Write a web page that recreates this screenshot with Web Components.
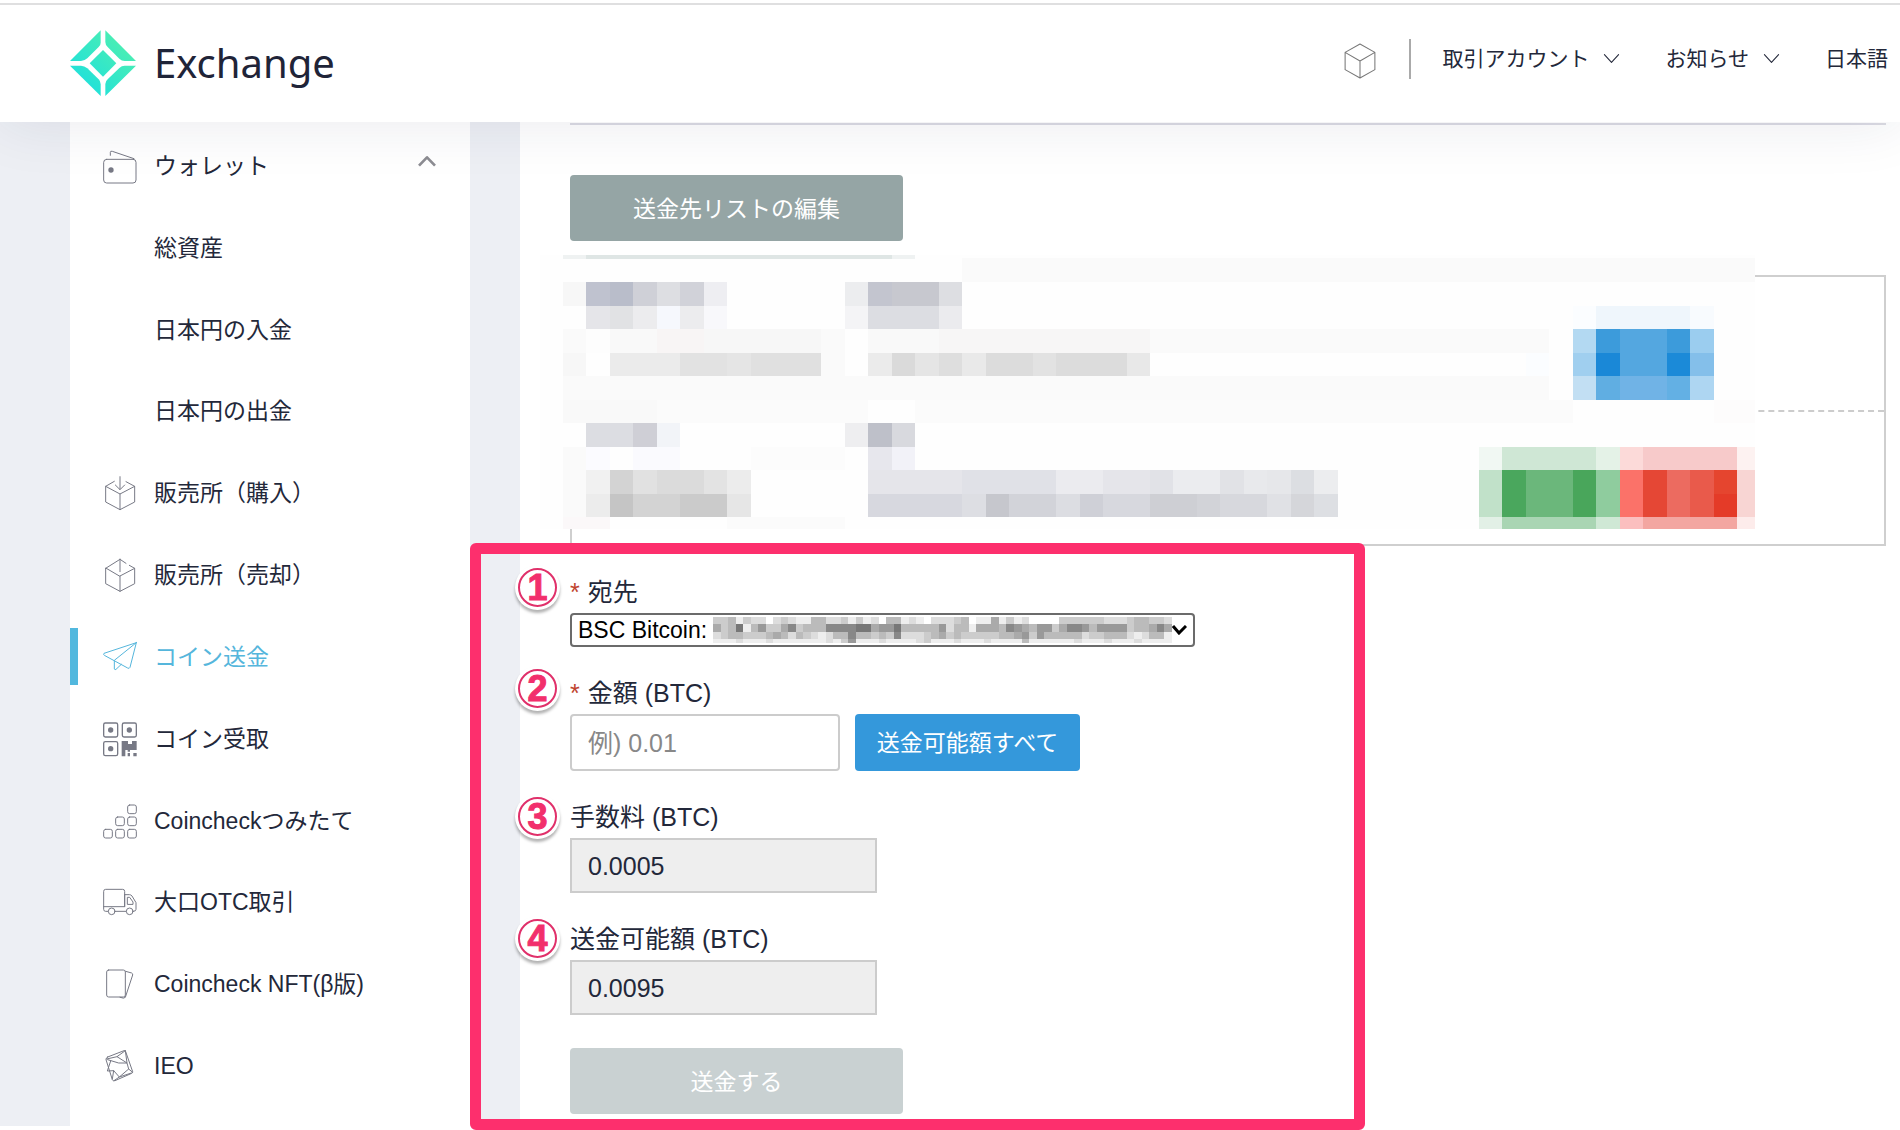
<!DOCTYPE html>
<html lang="ja">
<head>
<meta charset="utf-8">
<title>Coincheck Exchange - コイン送金</title>
<style>
body{margin:0;background:#fff;color:#23283a;font-family:"Liberation Sans","Noto Sans CJK JP",sans-serif;font-size:23px}
</style>
</head>
<body>
<cc-app></cc-app>
<script>
const define=(name,html,setup)=>customElements.define(name,class extends HTMLElement{
  connectedCallback(){
    if(this.shadowRoot)return;
    const t=document.createElement('template');
    t.innerHTML=typeof html==='function'?html(this):html;
    this.attachShadow({mode:'open'}).append(t.content.cloneNode(true));
    if(setup)setup(this,this.shadowRoot);
  }
});

/* Line icons, each with its own view box */
const ICONS={
wallet:['306 444 108 108','<rect x="311" y="478" width="97" height="71" rx="9"/><path d="M331 466V457Q331 452 337 454L402 476"/><circle cx="333" cy="510" r="8" fill="currentColor" stroke="none"/>'],
buy:['126 586 108 108','<path d="M163 605L137 620V667L180 690L224 667V620L198 606M137 620L180 643L224 620M180 643V690M180 591V629M166 616L180 630L194 616"/>'],
sell:['126 832 108 108','<path d="M137 866V912L180 935L224 912V866L180 889ZM180 889V935M137 866L180 839L198 851M208 857L224 866M180 838V876"/>'],
send:['126 1076 108 108','<path d="M229 1087L132 1119Q129 1122 133 1125L203 1163Q208 1166 210 1161L229 1087ZM229 1087L163 1140V1166Q165 1170 168 1167L184 1152"/>'],
qr:['126 91 108 108','<g stroke-width="4"><rect x="131" y="97" width="42" height="42" rx="5"/><rect x="187" y="97" width="42" height="42" rx="5"/><rect x="131" y="153" width="42" height="42" rx="5"/></g><g fill="currentColor" stroke="none"><circle cx="152" cy="118" r="8"/><circle cx="208" cy="118" r="8"/><circle cx="152" cy="174" r="8"/><path d="M185 151H204V160H216V151H230V178H196V197H185ZM203 187H210V197H203ZM220 187H230V197H220ZM203 178H210V183H203Z"/></g>'],
stack:['126 336 108 108','<rect x="203" y="342" width="26" height="26" rx="6"/><rect x="167" y="378" width="26" height="26" rx="6"/><rect x="203" y="378" width="26" height="26" rx="6"/><rect x="131" y="415" width="26" height="26" rx="6"/><rect x="167" y="415" width="26" height="26" rx="6"/><rect x="203" y="415" width="26" height="26" rx="6"/>'],
truck:['126 582 108 108','<path d="M144 664H137Q131 664 131 658V604Q131 598 137 598H188Q194 598 194 604V650H131M194 614H208Q213 614 216 618L228 638V658Q228 664 220 664M198 664H166M194 614V650M202 642V622H209L219 636V642Z"/><circle cx="155" cy="664" r="10"/><circle cx="209" cy="664" r="10"/>'],
cards:['126 826 108 108','<rect x="140" y="838" width="56" height="81" rx="6"/><path d="M197 842L215 847Q219 849 218 853L196 920Q193 925 180 920"/>'],
ieo:['12 7 108 108','<path d="M29 34L78 15Q82 14 83 18L104 78Q105 81 101 83L51 105Q45 107 43 102L24 42Q23 37 29 34ZM82 15L57 33L87 52L82 15M26 40L57 33M29 42L62 52L87 52L92 70L104 80M38 46L28 76L47 75L64 94L100 82M47 75L43 100M92 70L64 94L48 105"/>'],
cube:['0 0 90 104','<path d="M45 3L88 27V77L45 101L2 77V27ZM2 27L45 52L88 27M45 52V101"/>'],
down:['0 0 48 30','<path d="M4 4L24 26L44 4"/>'],
up:['0 0 54 36','<path stroke-width="8" stroke-linecap="butt" d="M3 32L27 7L51 32"/>']
};
define('cc-icon',el=>{
  const [vb,body]=ICONS[el.getAttribute('name')];
  return `<style>:host{display:block;flex:none;width:36px;height:36px}svg{display:block;width:100%;height:100%}</style>
  <svg viewBox="${vb}" fill="none" stroke="currentColor" stroke-width="3" stroke-linejoin="round" stroke-linecap="round" aria-hidden="true">${body}</svg>`;
});

define('cc-logo',`<style>
:host{display:block}
a{display:flex;align-items:center;gap:17px;color:#1f2438;text-decoration:none;font:40px/56px "Noto Sans",sans-serif}
svg{width:68px;height:68px;display:block}
</style>
<a href="#"><svg viewBox="208 87 204 204" aria-hidden="true">
<defs><linearGradient id="g" gradientUnits="userSpaceOnUse" x1="230" y1="250" x2="360" y2="120"><stop offset="0" stop-color="#1fe0dc"/><stop offset="1" stop-color="#4aeeb4"/></linearGradient></defs>
<g fill="url(#g)"><path d="M303 91V128Q303 136 297 141L263 175Q254 183 244 183H211Z"/><path d="M317 91L409 183H375Q366 183 359 176L324 141Q317 134 317 126Z"/><path d="M409 197L317 288V252Q317 244 324 238L359 204Q366 197 375 197Z"/><path d="M303 288L211 197H244Q254 197 263 205L297 238Q303 244 303 252Z"/><path d="M310 150L350 190L310 230L270 190Z"/></g></svg><span>Exchange</span></a>`);

define('cc-header',`<style>
:host{display:block;position:relative;z-index:1;background:#fff;box-shadow:0 0 60px rgba(30,40,80,.1)}
.strip{height:3px;border-bottom:2px solid #dfdfe0}
header{display:flex;align-items:center;justify-content:space-between;height:117px;padding:0 12px 2px 69px;box-sizing:border-box}
nav{display:flex;align-items:center;height:60px;margin-bottom:8px;font-size:21px;line-height:32px;color:#23283a}
.cube{width:34px;height:36px;color:#777;margin-right:32px;margin-top:4px}
.bar{width:2px;height:40px;background:#aaa;margin-right:31px}
a{display:flex;align-items:center;gap:14px;color:inherit;text-decoration:none;margin-right:45px;white-space:nowrap}
a:last-child{margin-right:0}
a cc-icon{width:17px;height:11px}
</style>
<div class="strip"></div>
<header><cc-logo></cc-logo>
<nav><cc-icon class="cube" name="cube"></cc-icon><span class="bar"></span>
<a href="#">取引アカウント<cc-icon name="down"></cc-icon></a><a href="#">お知らせ<cc-icon name="down"></cc-icon></a><a href="#">日本語</a></nav></header>`);

define('cc-nav-item',el=>`<style>
:host{display:flex;flex:1;align-items:center;color:#23283a}
a{flex:1;display:flex;align-items:center;height:57px;gap:16px;padding:0 34px 0 24px;border-left:8px solid transparent;color:inherit;text-decoration:none;line-height:34px}
span{flex:1;white-space:nowrap}
.lead{width:36px;height:36px;color:#777985}
.up{width:18px;height:12px;color:#8d8d93;margin-bottom:10px}
:host([active]){color:#55b6dc}
:host([active]) a{border-color:#52b8de}
:host([active]) .lead{color:inherit}
</style><a href="#">${el.hasAttribute('icon')?`<cc-icon class="lead" name="${el.getAttribute('icon')}"></cc-icon>`:'<i class="lead"></i>'}<span><slot></slot></span>${el.hasAttribute('open')?'<cc-icon class="up" name="up"></cc-icon>':''}</a>`);

define('cc-sidebar',`<style>
:host{display:flex;flex:none;width:400px;background:#fff}
nav{flex:1;display:flex;flex-direction:column;padding:3px 0 19px}
</style><nav>
<cc-nav-item icon="wallet" open>ウォレット</cc-nav-item>
<cc-nav-item>総資産</cc-nav-item>
<cc-nav-item>日本円の入金</cc-nav-item>
<cc-nav-item>日本円の出金</cc-nav-item>
<cc-nav-item icon="buy">販売所（購入）</cc-nav-item>
<cc-nav-item icon="sell">販売所（売却）</cc-nav-item>
<cc-nav-item icon="send" active>コイン送金</cc-nav-item>
<cc-nav-item icon="qr">コイン受取</cc-nav-item>
<cc-nav-item icon="stack">Coincheckつみたて</cc-nav-item>
<cc-nav-item icon="truck">大口OTC取引</cc-nav-item>
<cc-nav-item icon="cards">Coincheck NFT(β版)</cc-nav-item>
<cc-nav-item icon="ieo">IEO</cc-nav-item>
</nav>`);

/* Pixelated block: runs of [row, first column, columns, colour] */
const R=[
[-1,17,33.8,'fafafa'],
[0,0,1,'f7f7f7'],[0,1,1,'bfc2cf'],[0,2,1,'b9bdca'],[0,3,1,'cfd0d7'],[0,4,1,'dddee2'],[0,5,1,'d1d2d9'],[0,6,1,'eeeef2'],[0,12,1,'ecedef'],[0,13,1,'c3c5cf'],[0,14,2,'c7c8cf'],[0,16,1,'dddee2'],
[1,1,1,'e5e5e9'],[1,2,1,'e1e2e4'],[1,3,1,'ececee'],[1,4,1,'f6f8fd'],[1,5,1,'ececee'],[1,6,1,'f8f8fb'],[1,12,1,'f4f4f6'],[1,13,3,'dcdde2'],[1,16,1,'ebebee'],[1,43,1,'fbfdff'],[1,44,4,'eff6fc'],[1,48,1,'f8fbfe'],
[2,0,1,'fafafa'],[2,1,1,'fdfdfd'],[2,2,2,'f9f9f9'],[2,4,2,'f8f5f5'],[2,6,5,'f7f7f7'],[2,11,1,'fafafa'],[2,13,3,'f9f9f9'],[2,16,9,'f7f6f6'],[2,25,17,'fafafa'],[2,43,1,'b3d9f2'],[2,44,1,'3c9bdb'],[2,45,2,'54a7e0'],[2,47,1,'3c9bdb'],[2,48,1,'9bcdef'],
[3,0,1,'f7f7f7'],[3,2,3,'ebebeb'],[3,5,2,'e2e2e2'],[3,7,1,'e5e5e5'],[3,8,3,'e0e0e0'],[3,11,1,'fafafa'],[3,13,1,'ebebeb'],[3,14,1,'dadada'],[3,15,1,'e5e5e5'],[3,16,1,'dedede'],[3,17,1,'e9e9e9'],[3,18,2,'dcdcdc'],[3,20,1,'e2e2e2'],[3,21,3,'dcdcdc'],[3,24,1,'e8e8e8'],[3,41,1,'fbfdff'],[3,43,1,'a0cfef'],[3,44,1,'1a88d7'],[3,45,2,'54a7e0'],[3,47,1,'1b8ad8'],[3,48,1,'84bfea'],
[4,0,42,'fafafa'],[4,43,1,'c2dff3'],[4,44,1,'60aee2'],[4,45,2,'70b3e6'],[4,47,1,'63b0e4'],[4,48,1,'aed6f2'],
[5,0,4,'f9f9f9'],[5,4,9,'fbfbfb'],[5,15,28,'fbfbfb'],[5,49,1.8,'fdfcfc'],
[6,1,2,'dcdde2'],[6,3,1,'cfcfd6'],[6,4,1,'f2f4f8'],[6,12,1,'eeeef0'],[6,13,1,'bec0c9'],[6,14,1,'d8d9de'],
[7,0,1,'fafafa'],[7,1,1,'fbfbff'],[7,3,2,'fafafe'],[7,8,4,'fcfcfc'],[7,13,1,'e7e7ed'],[7,14,1,'f2f2f8'],[7,39,1,'f1f8f3'],[7,40,4,'cfe7d5'],[7,44,1,'e4f2e7'],[7,45,1,'fcdad9'],[7,46,4,'f7caca'],[7,50,.8,'fdf2f1'],
[8,0,1,'fafafa'],[8,1,1,'f1f1f1'],[8,2,1,'d3d3d3'],[8,3,1,'e1e1e1'],[8,4,2,'dbdbdb'],[8,6,1,'e3e3e3'],[8,7,1,'ececec'],[8,13,4,'e5e5ea'],[8,17,4,'e0e1e7'],[8,21,2,'ebebef'],[8,23,2,'e5e5ea'],[8,25,1,'e1e2e7'],[8,26,2,'ebecef'],[8,28,1,'e1e2e6'],[8,29,1,'e8e9ec'],[8,30,1,'e6e7ea'],[8,31,1,'dcdee2'],[8,32,1,'ecedef'],
[9,0,1,'fafafa'],[9,1,1,'ececec'],[9,2,1,'c5c5c5'],[9,3,2,'d3d3d3'],[9,5,2,'cbcbcb'],[9,7,1,'e6e6e6'],[9,13,4,'d7d8df'],[9,17,1,'dddee3'],[9,18,1,'c6c7cd'],[9,19,2,'d2d3d9'],[9,21,1,'dcdde2'],[9,22,1,'cfd0d7'],[9,23,2,'d7d8de'],[9,25,2,'cecfd4'],[9,27,1,'d2d3d8'],[9,28,2,'d7d8dd'],[9,30,1,'e0e1e5'],[9,31,1,'d5d6da'],[9,32,1,'dddfe3'],
[10,0,2,'fbf8f9'],[10,7,5,'fbfbfb'],[10,39,1,'e2f0e6'],[10,40,4,'a9d5b3'],[10,44,1,'cfe8d5'],[10,45,1,'fbbfbf'],[10,46,4,'f3a6a1'],[10,50,.8,'fdeceb']];
for(const r of [8,9])R.push([r,39,1,'c1e1c9'],[r,40,1,'4aa75d'],[r,41,2,'6bb77b'],[r,43,1,'49a65b'],[r,44,1,'8fcc9e'],[r,45,1,'fb7269'],[r,46,1,'e54735'],[r,47,1,'ec6b60'],[r,48,1,'e95a4b'],[r,49,1,r==8?'e5452f':'e43b28'],[r,50,.8,'f8d5d3']);
define('cc-mosaic',()=>`<style>:host{display:block;width:1215px;height:274px}svg{display:block}</style>
<svg width="1215" height="274" shape-rendering="crispEdges" aria-hidden="true"><rect width="1215" height="274" fill="#fefefe"/>
<path fill="#eff2f2" d="M23 0h352v4H23z"/><path fill="#dfe6e5" d="M46 0h306v4H46z"/>
${R.map(([r,c,w,f])=>{const x=23+Math.round(c*23.48),y=27+Math.round(r*23.54);return `<rect x="${x}" y="${y}" width="${23+Math.round((c+w)*23.48)-x}" height="${r==10?12:27+Math.round((r+1)*23.54)-y}" fill="#${f}"/>`}).join('')}</svg>`);

/* Pixelated address: one grey level per cell */
const G=['ccbecddfdcdeebbddcecedfbbedefdddcbfeeaecedffffccccccdddcbbccd','acb7eb9cca8cbbb888877a997bbbbb9dbbeaaab89ab99ca889b9999cbba8a','dcbbcccbabdbcdedbb8bbcbc8dddcbacbcccccbba9c9bbbbbdccbbbdedbbe','eeedeeedeeeeeeedec9eeedeeeedceeedeeedeeeebeeeeeedeeedeeedeeee'];
define('cc-mosaic-strip',()=>`<style>:host{display:block}svg{display:block}</style>
<svg width="459" height="26" viewBox="0 0 61 26" preserveAspectRatio="none" shape-rendering="crispEdges" aria-hidden="true"><rect width="61" height="26" fill="#e6e6e6"/>${G.map((s,r)=>[...s].slice(0,61).map((g,i)=>`<rect x="${i}" y="${[0,7,15,22][r]}" width="1" height="${[7,8,7,4][r]}" fill="#${g}${g}${g}"/>`).join('')).join('')}</svg>`);

define('cc-address-list',`<style>
:host{display:block;position:relative;margin-top:34px;border:2px solid #cfcfcf}
.row{height:133px}
.row+.row{border-top:2px dashed #ccc;height:132px}
cc-mosaic{position:absolute;left:-32px;top:-22px}
</style><div class="row"></div><div class="row"></div><cc-mosaic></cc-mosaic>`);

define('cc-marker',`<style>
:host{position:absolute;left:-52px;top:-6px;display:flex;align-items:center;justify-content:center;box-sizing:border-box;width:39px;height:39px;border:2px solid #e0306a;border-radius:50%;background:#fff;box-shadow:0 0 0 3px #fff,0 3px 3px 3px rgba(0,0,0,.3);color:#f22f6c;font:bold 36px/36px "Liberation Sans",sans-serif;-webkit-text-stroke:1px #f22f6c}
:host([low]){top:-2px}
</style><slot></slot>`);

define('cc-send-form',`<style>
:host{display:block;margin-top:28px}
form{display:flex;flex-direction:column;gap:28px;align-items:flex-start}
.group{position:relative;display:flex;flex-direction:column;gap:2px}
label{font-size:25px;line-height:37px;white-space:nowrap}
label b{font-weight:400;color:#c0442f;margin-right:8px}
.select{display:flex;position:relative}
select{appearance:none;box-sizing:border-box;width:625px;height:34px;margin:0;padding:0 6px;border:2px solid #6b6b6b;border-radius:4px;background:#fff;color:#000;font:inherit;line-height:28px}
.select cc-mosaic-strip{position:absolute;left:143px;top:4px}
.select svg{position:absolute;right:8px;top:12px}
.line{display:flex;gap:15px}
input{box-sizing:border-box;width:307px;height:55px;margin:0;padding:2px 16px 0;border:2px solid #ccc;background:#eee;color:inherit;font-family:inherit;font-size:25px}
input.amount{width:270px;height:57px;background:#fff;border-radius:4px}
input::placeholder{color:#888;opacity:1}
button{margin:0;padding:0 0 3px;border:0;border-radius:4px;color:#fff;font:inherit}
.all{width:225px;background:#3498db}
.submit{width:333px;height:66px;margin-top:5px;background:#c9d1d2}
</style>
<form>
<div class="group"><cc-marker>1</cc-marker><label for="to"><b>*</b>宛先</label>
<div class="select"><select id="to"><option>BSC Bitcoin:</option></select><cc-mosaic-strip></cc-mosaic-strip><svg width="15" height="10" viewBox="0 0 15 10" fill="none" stroke="#000" stroke-width="3" aria-hidden="true"><path d="M1 1L7 8L14 1"/></svg></div></div>
<div class="group"><cc-marker>2</cc-marker><label for="amount"><b>*</b>金額 (BTC)</label>
<div class="line"><input class="amount" id="amount" placeholder="例) 0.01"><button class="all" type="button">送金可能額すべて</button></div></div>
<div class="group"><cc-marker low>3</cc-marker><label for="fee">手数料 (BTC)</label><input id="fee" value="0.0005" readonly></div>
<div class="group"><cc-marker low>4</cc-marker><label for="avail">送金可能額 (BTC)</label><input id="avail" value="0.0095" readonly></div>
<button class="submit" type="button">送金する</button>
</form>`);

define('cc-main',`<style>
:host{display:block;position:relative;flex:1;background:#fff;padding:1px 14px 12px 50px}
hr{margin:0 0 50px;border:0;height:2px;background:#dcdce4}
.edit{display:block;width:333px;height:66px;margin:0;padding:0 0 3px;border:0;border-radius:4px;background:#95a5a5;color:#fff;font:inherit}
.frame{position:absolute;left:-50px;top:421px;bottom:-4px;width:895px;box-sizing:border-box;border:11px solid #fd2f6d;border-radius:6px;pointer-events:none}
</style>
<hr><button class="edit" type="button">送金先リストの編集</button>
<cc-address-list></cc-address-list>
<div class="frame"></div>
<cc-send-form></cc-send-form>`);

define('cc-app',`<style>
:host{display:flex;flex-direction:column;box-sizing:border-box;min-height:100vh;padding-bottom:4px}
.body{flex:1;display:flex;background:#edeff4;padding-left:70px}
cc-main{margin-left:50px}
</style>
<cc-header></cc-header>
<div class="body"><cc-sidebar></cc-sidebar><cc-main></cc-main></div>`);
</script>
</body>
</html>
